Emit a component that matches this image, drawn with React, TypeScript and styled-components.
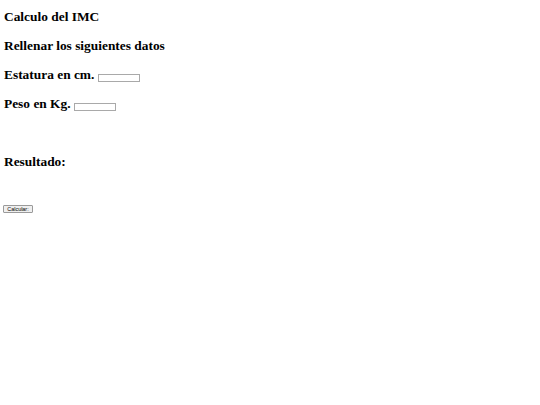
import React, { useState } from "react";
import styled, { createGlobalStyle } from "styled-components";

const GlobalStyle = createGlobalStyle`
  html, body {
    margin: 0;
    padding: 0;
    background: #ffffff;
  }
  body {
    font-family: "Liberation Serif", "Times New Roman", serif;
    color: #000000;
  }
`;

const Page = styled.div`
  padding: 0 4px;
`;

const Heading = styled.h2<{ $gap?: number }>`
  font-family: "Liberation Serif", "Times New Roman", serif;
  font-size: 13.4px;
  font-weight: bold;
  line-height: 15px;
  margin: ${(p) => (p.$gap ? `${p.$gap}px` : "9px")} 0 14px;
`;

const Field = styled.input`
  box-sizing: border-box;
  width: 42px;
  height: 8px;
  padding: 0;
  margin: 0;
  border: 1px solid #a9a9a9;
  background: #ffffff;
  font-size: 5px;
  vertical-align: -1px;
  outline: none;
`;

const ResultValue = styled.div`
  min-height: 22px;
  font-family: "Liberation Serif", "Times New Roman", serif;
  font-size: 13.4px;
`;

const CalcButton = styled.button`
  display: block;
  box-sizing: border-box;
  width: 30px;
  height: 8px;
  padding: 0;
  margin: 0 0 0 -1px;
  border: 1px solid #9a9a9a;
  border-radius: 1px;
  background: #efefef;
  font-family: "Liberation Sans", Arial, sans-serif;
  font-size: 5.4px;
  line-height: 6px;
  color: #000000;
  cursor: pointer;
`;

export default function App() {
  const [height, setHeight] = useState("");
  const [weight, setWeight] = useState("");
  const [result, setResult] = useState("");

  const calculate = () => {
    const h = parseFloat(height) / 100;
    const w = parseFloat(weight);
    if (!h || !w) {
      setResult("");
      return;
    }
    setResult((w / (h * h)).toFixed(2));
  };

  return (
    <>
      <GlobalStyle />
      <Page>
        <Heading>Calculo del IMC</Heading>
        <Heading>Rellenar los siguientes datos</Heading>
        <Heading>
          Estatura en cm.{" "}
          <Field value={height} onChange={(e) => setHeight(e.target.value)} />
        </Heading>
        <Heading>
          Peso en Kg.{" "}
          <Field value={weight} onChange={(e) => setWeight(e.target.value)} />
        </Heading>
        <Heading $gap={43}>Resultado:</Heading>
        <ResultValue>{result}</ResultValue>
        <CalcButton onClick={calculate}>Calcular:</CalcButton>
      </Page>
    </>
  );
}
